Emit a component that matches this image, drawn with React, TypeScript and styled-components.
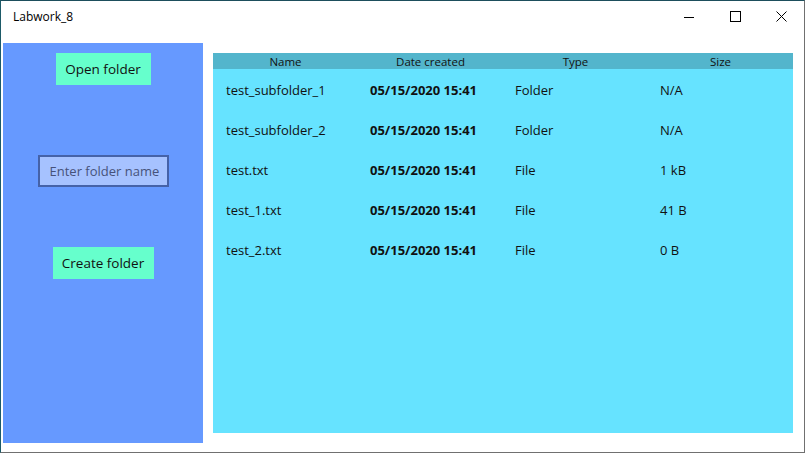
import React from "react";
import styled, { createGlobalStyle } from "styled-components";

const Global = createGlobalStyle`
  html, body { margin: 0; padding: 0; background: #ffffff; }
  body { font-family: "Open Sans", "Noto Sans", sans-serif; }
`;

const Window = styled.div`
  box-sizing: border-box;
  width: 805px;
  height: 453px;
  border-top: 1px solid #1d4e5c;
  border-left: 1px solid #1d5a68;
  border-right: 1px solid #707070;
  border-bottom: 1px solid #707070;
  background: #ffffff;
  display: flex;
  flex-direction: column;
  overflow: hidden;
`;

const TitleBar = styled.div`
  height: 42px;
  display: flex;
  align-items: flex-start;
  flex-shrink: 0;
`;

const Title = styled.div`
  flex: 1;
  padding-left: 12px;
  height: 31px;
  line-height: 31px;
  font-size: 12px;
  color: #000;
`;

const CaptionButton = styled.div`
  width: 46px;
  height: 31px;
  display: flex;
  align-items: center;
  justify-content: center;
`;

const Body = styled.div`
  display: flex;
  align-items: flex-start;
  gap: 10px;
  padding-left: 2px;
`;

const SidePanel = styled.div`
  width: 200px;
  height: 400px;
  background: #6699ff;
  display: flex;
  flex-direction: column;
  align-items: center;
  padding-top: 10px;
  box-sizing: border-box;
`;

const ActionButton = styled.div<{ $mt?: number; $w: number }>`
  margin-top: ${(p) => p.$mt ?? 0}px;
  width: ${(p) => p.$w}px;
  height: 32px;
  background: #66ffcc;
  display: flex;
  align-items: center;
  justify-content: center;
  font-size: 13.5px;
  color: #111;
`;

const NameInput = styled.div`
  margin-top: 70px;
  box-sizing: border-box;
  width: 131px;
  height: 32px;
  border: 2px solid #4562a8;
  background: #a6c2ff;
  display: flex;
  align-items: center;
  padding-left: 10px;
  font-size: 13px;
  color: #46527a;
  white-space: nowrap;
  overflow: hidden;
`;

const TablePanel = styled.div`
  margin-top: 10px;
  width: 580px;
  height: 380px;
  background: #66e3ff;
`;

const Columns = "repeat(4, 145px)";

const HeaderRow = styled.div`
  display: grid;
  grid-template-columns: ${Columns};
  height: 16px;
  background: #53b5cc;
  font-size: 11.5px;
  line-height: 17px;
  color: #111;
`;

const HeaderCell = styled.div`
  text-align: center;
`;

const Row = styled.div`
  box-sizing: border-box;
  display: grid;
  grid-template-columns: ${Columns};
  height: 40px;
  align-items: center;
  padding-top: 2px;
  font-size: 13px;
  color: #111;
`;

const Cell = styled.div<{ $bold?: boolean; $pl?: number }>`
  padding-left: ${(p) => p.$pl ?? 12}px;
  font-weight: ${(p) => (p.$bold ? 700 : 400)};
  white-space: nowrap;
`;

const rows = [
  ["test_subfolder_1", "05/15/2020 15:41", "Folder", "N/A"],
  ["test_subfolder_2", "05/15/2020 15:41", "Folder", "N/A"],
  ["test.txt", "05/15/2020 15:41", "File", "1 kB"],
  ["test_1.txt", "05/15/2020 15:41", "File", "41 B"],
  ["test_2.txt", "05/15/2020 15:41", "File", "0 B"],
];

export default function App() {
  return (
    <>
      <Global />
      <Window>
        <TitleBar>
          <Title>Labwork_8</Title>
          <CaptionButton>
            <svg width="10" height="10" viewBox="0 0 10 10">
              <line x1="0" y1="5.5" x2="10" y2="5.5" stroke="#000" strokeWidth="1" />
            </svg>
          </CaptionButton>
          <CaptionButton>
            <svg width="11" height="11" viewBox="0 0 11 11">
              <rect x="0.5" y="0.5" width="10" height="10" fill="none" stroke="#000" strokeWidth="1" />
            </svg>
          </CaptionButton>
          <CaptionButton>
            <svg width="11" height="11" viewBox="0 0 11 11">
              <path d="M0.5 0.5 L10.5 10.5 M10.5 0.5 L0.5 10.5" stroke="#000" strokeWidth="1" />
            </svg>
          </CaptionButton>
        </TitleBar>
        <Body>
          <SidePanel>
            <ActionButton $w={95}>Open folder</ActionButton>
            <NameInput>Enter folder name</NameInput>
            <ActionButton $mt={60} $w={101}>Create folder</ActionButton>
          </SidePanel>
          <TablePanel>
            <HeaderRow>
              <HeaderCell>Name</HeaderCell>
              <HeaderCell>Date created</HeaderCell>
              <HeaderCell>Type</HeaderCell>
              <HeaderCell>Size</HeaderCell>
            </HeaderRow>
            {rows.map((r) => (
              <Row key={r[0]}>
                <Cell $pl={13}>{r[0]}</Cell>
                <Cell $bold>{r[1]}</Cell>
                <Cell>{r[2]}</Cell>
                <Cell>{r[3]}</Cell>
              </Row>
            ))}
          </TablePanel>
        </Body>
      </Window>
    </>
  );
}
